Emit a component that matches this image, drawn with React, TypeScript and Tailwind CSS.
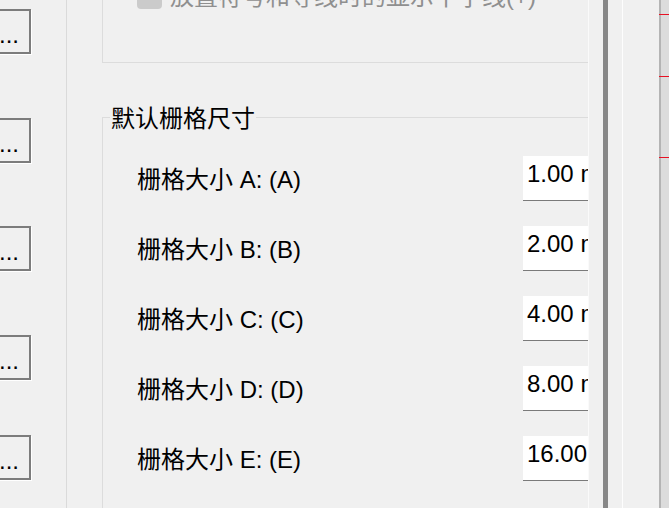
import React from 'react';

const latin = { fontFamily: '"Liberation Sans", "Noto Sans CJK SC", sans-serif' };
const cjk = { fontFamily: '"Noto Sans CJK SC", "Liberation Sans", sans-serif' };

const gridSizes = [
  { key: 'A', value: '1.00 mm' },
  { key: 'B', value: '2.00 mm' },
  { key: 'C', value: '4.00 mm' },
  { key: 'D', value: '8.00 mm' },
  { key: 'E', value: '16.00 mm' },
];

// gaps between the "..." buttons on the left
const buttonGaps = ['mt-[9px]', 'mt-[64px]', 'mt-[63px]', 'mt-[64px]', 'mt-[55px]'];

const EllipsisButton: React.FC<{ className: string }> = ({ className }) => (
  <button
    className={`${className} -ml-[13px] flex h-[45px] w-[44px] shrink-0 items-center justify-center border-2 border-[#7c7c7c] bg-[#f0f0f0] text-[24px] leading-none text-black shadow-[1px_1px_0_#ffffff]`}
    style={latin}
  >
    <span className="mt-[6px]">...</span>
  </button>
);

export default function App() {
  return (
    <div className="flex h-[508px] w-[669px] overflow-hidden bg-[#f0f0f0] text-black select-none">
      {/* left column with browse buttons */}
      <div className="flex w-[67px] shrink-0 flex-col border-r border-[#dadada]">
        {buttonGaps.map((gap, idx) => (
          <EllipsisButton key={idx} className={gap} />
        ))}
      </div>

      {/* main settings panel */}
      <div className="w-[521px] shrink-0 overflow-hidden">
        {/* previous group, mostly scrolled out */}
        <div className="-mt-[40px] ml-[35px] h-[103px] w-[600px] border-x border-b border-[#dcdcdc]">
          <div className="flex items-center gap-[8px] pl-[34px] pt-[22px]">
            <span className="h-[24px] w-[25px] shrink-0 rounded-[4px] bg-[#cbcbcb]" />
            <span className="whitespace-nowrap text-[24px] leading-[30px] text-[#8f8f8f]" style={latin}>
              放置符号和导线时的显示十字线(+)
            </span>
          </div>
        </div>

        {/* default grid sizes */}
        <div className="ml-[35px] mt-[54px] h-[500px] w-[600px] border-l border-t border-[#dcdcdc]">
          <span
            className="-mt-[16px] ml-[7px] block w-fit bg-[#f0f0f0] px-[1px] text-[24px] leading-[30px]"
            style={cjk}
          >
            默认栅格尺寸
          </span>
          <div className="mt-[24px] flex flex-col gap-[25px] pl-[34px]">
            {gridSizes.map((g) => (
              <div key={g.key} className="flex h-[45px] items-center">
                <span className="w-[386px] shrink-0 pt-[3px] text-[24px] leading-[30px]" style={latin}>
                  栅格大小 {g.key}: ({g.key})
                </span>
                <div
                  className="h-[45px] w-[120px] shrink-0 overflow-hidden whitespace-nowrap border-b border-[#7a7a7a] bg-white pl-[4px] pt-[5px] text-[24px] leading-[26px]"
                  style={latin}
                >
                  {g.value}
                </div>
              </div>
            ))}
          </div>
        </div>
      </div>

      {/* splitter and neighbouring panes */}
      <div className="w-px shrink-0 bg-[#fafafa]" />
      <div className="w-[14px] shrink-0" />
      <div className="w-[5px] shrink-0 bg-[#878787]" />
      <div className="w-[14px] shrink-0" />
      <div className="w-px shrink-0 bg-[#fdfdfd]" />
      <div className="w-[36px] shrink-0" />
      <div className="flex w-[10px] shrink-0 flex-col bg-[#dcdcdc] shadow-[inset_2px_0_0_#b4b4b4]">
        <div className="mt-[14px] h-px bg-[#e81123]" />
        <div className="mt-[61px] h-px bg-[#e81123]" />
        <div className="mt-[80px] h-px bg-[#e81123]" />
      </div>
    </div>
  );
}
